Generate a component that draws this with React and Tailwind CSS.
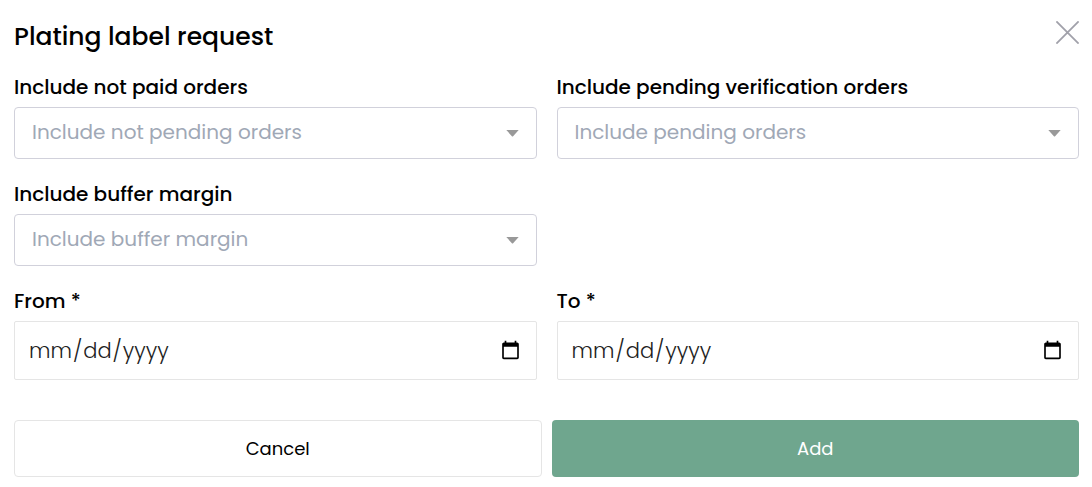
import { useState } from 'react';

const SELECTS = [
    { id: 'notPaid', label: 'Include not paid orders', placeholder: 'Include not pending orders' },
    { id: 'pending', label: 'Include pending verification orders', placeholder: 'Include pending orders' },
    { id: 'buffer', label: 'Include buffer margin', placeholder: 'Include buffer margin' },
];

const DATES = [
    { id: 'from', label: 'From *' },
    { id: 'to', label: 'To *' },
];

function Field({ id, label, children }) {
    return (
        <div className="flex min-w-0 flex-col gap-1">
            <label htmlFor={id} className="text-[20px] leading-[31px] font-medium text-black">{label}</label>
            {children}
        </div>
    );
}

function SelectField({ id, label, placeholder, value, onChange }) {
    return (
        <Field id={id} label={label}>
            <div className="relative">
                <select
                    id={id}
                    value={value}
                    onChange={e => onChange(id, e.target.value)}
                    className={`block h-[52px] w-full appearance-none rounded border border-[#d1d1db] bg-white pr-10 pb-[2px] pl-[17px] text-[20px] focus:outline-none focus:border-[#6fa68e] ${value ? 'text-black' : 'text-[#a0a8b6]'}`}
                >
                    <option value="" disabled hidden>{placeholder}</option>
                    <option value="yes">Yes</option>
                    <option value="no">No</option>
                </select>
                <svg viewBox="0 0 13 7" className="pointer-events-none absolute top-[23px] right-[18px] h-[7px] w-[13px]" fill="#999999">
                    <path d="M0.3 0h12.4L7.1 6.2a0.8 0.8 0 0 1-1.2 0z" />
                </svg>
            </div>
        </Field>
    );
}

export default function App() {
    const [values, setValues] = useState({ notPaid: '', pending: '', buffer: '', from: '', to: '' });

    const handleChange = (id, val) => setValues(prev => ({ ...prev, [id]: val }));

    return (
        <form
            onSubmit={e => e.preventDefault()}
            className="bg-white pt-[18px] pr-[13px] pb-[10px] pl-[14px] font-['Poppins','Inter',sans-serif]"
        >
            {/* Header */}
            <div className="mb-[18px] flex h-9 items-start justify-between">
                <h1 className="text-[25px] leading-[37px] font-medium text-black">Plating label request</h1>
                <button type="button" aria-label="Close" className="mt-[3px] text-[#a1a1aa]">
                    <svg viewBox="0 0 23 23" className="block h-[23px] w-[23px]" fill="none" stroke="currentColor" strokeWidth="1.8">
                        <path d="M0.4 0.4l22.2 22.2M22.6 0.4L0.4 22.6" />
                    </svg>
                </button>
            </div>

            {/* Filters */}
            <div className="grid grid-cols-2 gap-5">
                {SELECTS.map(s => (
                    <SelectField key={s.id} {...s} value={values[s.id]} onChange={handleChange} />
                ))}
            </div>

            {/* Date range */}
            <div className="mt-5 grid grid-cols-2 gap-5">
                {DATES.map(d => (
                    <Field key={d.id} id={d.id} label={d.label}>
                        <input
                            id={d.id}
                            type="date"
                            value={values[d.id]}
                            onChange={e => handleChange(d.id, e.target.value)}
                            className="h-[59px] w-full rounded-xs border border-[#e5e5e5] bg-white px-[13px] text-[21px] font-light text-[#222222] focus:outline-none focus:border-[#6fa68e]"
                        />
                    </Field>
                ))}
            </div>

            {/* Actions */}
            <div className="mt-10 grid grid-cols-2 gap-[10px]">
                <button type="button" className="h-[57px] rounded border border-[#e5e5e5] bg-white text-[18px] text-black">Cancel</button>
                <button type="submit" className="h-[57px] rounded bg-[#6fa68e] text-[18px] text-white">Add</button>
            </div>
        </form>
    );
}
